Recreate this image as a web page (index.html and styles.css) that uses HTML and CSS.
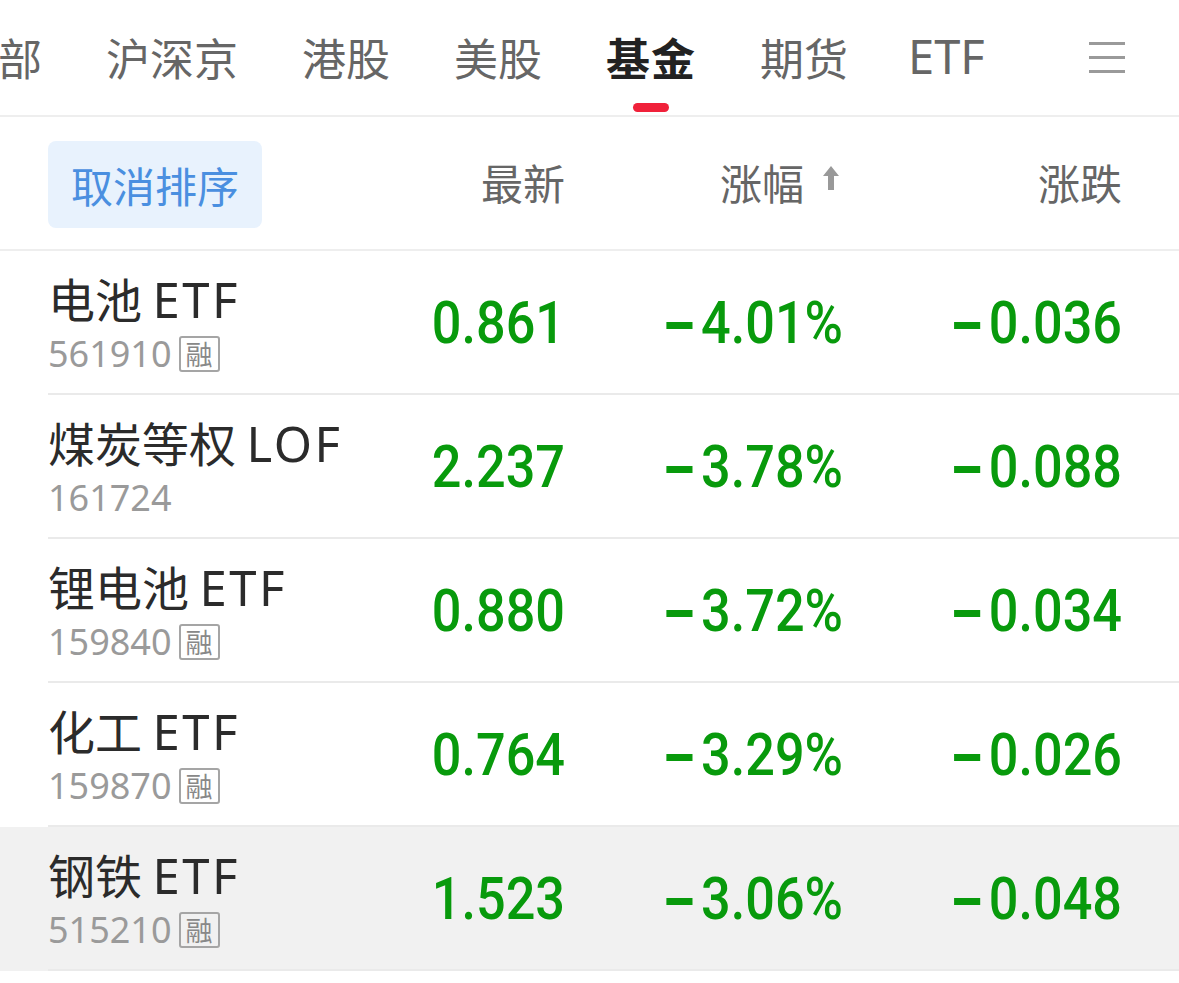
FILE: index.html
```html
<!DOCTYPE html>
<html lang="zh-CN">
<head>
<meta charset="utf-8">
<title>基金</title>
<link rel="stylesheet" href="styles.css">
</head>
<body>
<div class="page">
  <nav class="tabs">
    <span class="tab first">全部</span>
    <span class="tab">沪深京</span>
    <span class="tab">港股</span>
    <span class="tab">美股</span>
    <span class="tab active">基金</span>
    <span class="tab">期货</span>
    <span class="tab latin">ETF</span>
    <span class="menu" aria-label="menu">
      <svg width="38" height="34" viewBox="0 0 38 34"><g fill="#9a9a9a"><rect x="1" y="2" width="36" height="3"/><rect x="1" y="16" width="36" height="3"/><rect x="1" y="30" width="36" height="3"/></g></svg>
    </span>
  </nav>

  <div class="head">
    <div class="cell-name"><span class="cancel">取消排序</span></div>
    <div class="hcol">最新</div>
    <div class="hcol">涨幅<svg class="arrow" width="18" height="26" viewBox="0 0 18 26"><path d="M9 1 L17 11 L12 11 L12 25 L6 25 L6 11 L1 11 Z" fill="#999"/></svg></div>
    <div class="hcol">涨跌</div>
  </div>

  <div class="list">
    <div class="row">
      <div class="row-in">
        <div class="cell-name">
          <div class="name">电池 <span class="lat">ETF</span></div>
          <div class="code">561910<span class="badge">融</span></div>
        </div>
        <div class="num">0.861</div>
        <div class="num"><span class="minus"></span>4.01%</div>
        <div class="num"><span class="minus"></span>0.036</div>
      </div>
    </div>
    <div class="row">
      <div class="row-in">
        <div class="cell-name">
          <div class="name">煤炭等权 <span class="lat">LOF</span></div>
          <div class="code">161724</div>
        </div>
        <div class="num">2.237</div>
        <div class="num"><span class="minus"></span>3.78%</div>
        <div class="num"><span class="minus"></span>0.088</div>
      </div>
    </div>
    <div class="row">
      <div class="row-in">
        <div class="cell-name">
          <div class="name">锂电池 <span class="lat">ETF</span></div>
          <div class="code">159840<span class="badge">融</span></div>
        </div>
        <div class="num">0.880</div>
        <div class="num"><span class="minus"></span>3.72%</div>
        <div class="num"><span class="minus"></span>0.034</div>
      </div>
    </div>
    <div class="row">
      <div class="row-in">
        <div class="cell-name">
          <div class="name">化工 <span class="lat">ETF</span></div>
          <div class="code">159870<span class="badge">融</span></div>
        </div>
        <div class="num">0.764</div>
        <div class="num"><span class="minus"></span>3.29%</div>
        <div class="num"><span class="minus"></span>0.026</div>
      </div>
    </div>
    <div class="row hl">
      <div class="row-in">
        <div class="cell-name">
          <div class="name">钢铁 <span class="lat">ETF</span></div>
          <div class="code">515210<span class="badge">融</span></div>
        </div>
        <div class="num">1.523</div>
        <div class="num"><span class="minus"></span>3.06%</div>
        <div class="num"><span class="minus"></span>0.048</div>
      </div>
    </div>
  </div>
</div>
</body>
</html>
```

FILE: styles.css
```css
html, body {
  margin: 0;
  padding: 0;
  background: #ffffff;
}
body {
  font-family: "Noto Sans CJK SC", "Noto Sans", sans-serif;
  color: #333;
  overflow: hidden;
}
.page {
  width: 1179px;
}

/* tabs */
.tabs {
  position: relative;
  display: flex;
  align-items: center;
  height: 117px;
  border-bottom: 2px solid #eeeeee;
  box-sizing: border-box;
  gap: 64px;
  margin-left: -46px;
}
.tab {
  position: relative;
  font-size: 44px;
  line-height: 1;
  color: #666;
  margin-top: -2px;
}
.tab.latin {
  font-family: "Noto Sans", "Liberation Sans", sans-serif;
  font-size: 47px;
  margin-left: -4px;
}
.tab.active {
  color: #222;
  font-weight: 700;
  letter-spacing: 1px;
}
.tab.active::after {
  content: "";
  position: absolute;
  left: 50%;
  top: 68px;
  width: 36px;
  height: 9px;
  margin-left: -18px;
  border-radius: 5px;
  background: #f0213a;
}
.menu {
  margin-left: auto;
  margin-right: 53px;
  display: flex;
  margin-top: -2px;
}

/* header */
.head {
  display: grid;
  grid-template-columns: 239px 278px 278px 279px;
  padding-left: 48px;
  align-items: center;
  height: 134px;
  border-bottom: 2px solid #eeeeee;
  box-sizing: border-box;
}
.cancel {
  display: inline-flex;
  align-items: center;
  justify-content: center;
  width: 214px;
  height: 87px;
  margin-top: 2px;
  background: #e8f2fd;
  border-radius: 8px;
  color: #4a8fe0;
  font-size: 42px;
}
.hcol {
  display: flex;
  justify-content: flex-end;
  align-items: center;
  font-size: 42px;
  color: #666;
  margin-top: -4px;
}
.arrow {
  margin-left: 18px;
  margin-right: 3px;
  margin-top: -6px;
}

/* rows */
.row {
  height: 144px;
}
.row.hl {
  background: #f1f1f1;
}
.row-in {
  margin-left: 48px;
  height: 144px;
  box-sizing: border-box;
  border-bottom: 2px solid #eaeaea;
  display: grid;
  grid-template-columns: 239px 278px 278px 279px;
  align-items: center;
}
.cell-name {
  display: flex;
  flex-direction: column;
  justify-content: center;
}
.name {
  font-size: 47px;
  line-height: 50px;
  color: #2b2b2b;
  white-space: nowrap;
  margin-top: 2px;
}
.lat {
  font-family: "Noto Sans", "Liberation Sans", sans-serif;
  font-size: 49px;
  letter-spacing: 2.5px;
}
.code {
  display: flex;
  align-items: center;
  font-family: "Noto Sans", "Liberation Sans", sans-serif;
  font-size: 36px;
  line-height: 40px;
  color: #9a9a9a;
  margin-top: 10px;
}
.badge {
  display: inline-flex;
  align-items: center;
  justify-content: center;
  width: 37px;
  height: 32px;
  margin-left: 7px;
  border: 2px solid #a5a5a5;
  border-radius: 3px;
  font-family: "Noto Sans CJK SC", sans-serif;
  font-size: 27px;
  line-height: 1;
  color: #888;
}
.num {
  text-align: right;
  font-family: "Roboto", "Liberation Sans", sans-serif;
  font-weight: 500;
  font-size: 60px;
  line-height: 1;
  color: #089a0c;
  transform: scaleX(0.87);
  transform-origin: right center;
  margin-top: 2px;
}
.minus {
  display: inline-block;
  width: 30px;
  height: 7px;
  background: currentColor;
  vertical-align: middle;
  margin-right: 10px;
  margin-top: -4px;
}
```
